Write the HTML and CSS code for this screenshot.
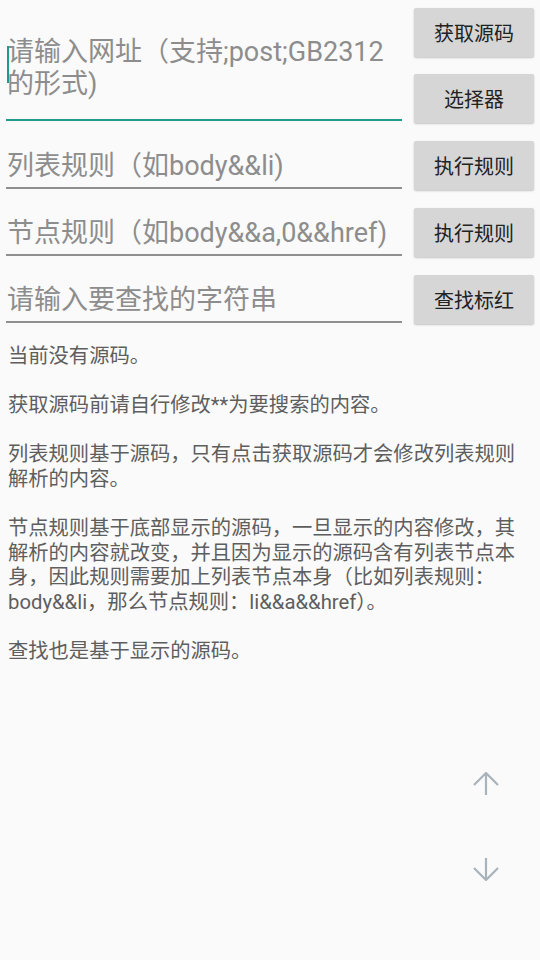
FILE: index.html
```html
<!DOCTYPE html>
<html lang="zh-CN">
<head>
<meta charset="utf-8">
<title>规则测试</title>
<link rel="stylesheet" href="styles.css">
</head>
<body>
<div class="form">
  <div class="row">
    <div class="field field--focus">
      <span class="cursor"></span>
      <span class="hint">请输入网址（支持;post;GB2312<br>的形式)</span>
    </div>
    <div class="btn-col">
      <div class="btn">获取源码</div>
      <div class="btn">选择器</div>
    </div>
  </div>
  <div class="row">
    <div class="field"><span class="hint">列表规则（如body&amp;&amp;li)</span></div>
    <div class="btn-col"><div class="btn">执行规则</div></div>
  </div>
  <div class="row">
    <div class="field"><span class="hint">节点规则（如body&amp;&amp;a,0&amp;&amp;href)</span></div>
    <div class="btn-col"><div class="btn">执行规则</div></div>
  </div>
  <div class="row">
    <div class="field"><span class="hint">请输入要查找的字符串</span></div>
    <div class="btn-col"><div class="btn">查找标红</div></div>
  </div>
</div>
<div class="info">
  <p>当前没有源码。</p>
  <p>获取源码前请自行修改**为要搜索的内容。</p>
  <p>列表规则基于源码，只有点击获取源码才会修改列表规则解析的内容。</p>
  <p>节点规则基于底部显示的源码，一旦显示的内容修改，其解析的内容就改变，并且因为显示的源码含有列表节点本身，因此规则需要加上列表节点本身（比如列表规则：body&amp;&amp;li，那么节点规则：li&amp;&amp;a&amp;&amp;href）。</p>
  <p>查找也是基于显示的源码。</p>
</div>
<div class="scroll-btns">
  <svg class="arrow" viewBox="0 0 26 24" width="26" height="24"><path d="M13 1V23M1 13L13 1L25 13"/></svg>
  <svg class="arrow" viewBox="0 0 26 24" width="26" height="24"><path d="M13 1V23M1 11L13 23L25 11"/></svg>
</div>
</body>
</html>
```
FILE: styles.css
```css
html, body {
  margin: 0;
  padding: 0;
  background: #fafafa;
}
body {
  width: 540px;
  height: 960px;
  position: relative;
  overflow: hidden;
  font-family: Roboto, "Noto Sans CJK SC", sans-serif;
}
.form {
  display: flex;
  flex-direction: column;
  gap: 2px;
  padding: 0 6px;
}
.row {
  display: flex;
  gap: 12px;
}
.field {
  flex: 1;
  position: relative;
  display: flex;
  flex-direction: column;
  justify-content: flex-end;
  padding: 0 0 5px 1px;
  margin-bottom: 9px;
  border-bottom: 2px solid #8f8f8f;
}
.field--focus {
  padding-bottom: 19px;
  margin-bottom: 10px;
  border-bottom-color: #1f9a8c;
}
.hint {
  font-size: 27px;
  line-height: 32px;
  color: #8d8d8d;
  white-space: nowrap;
}
.cursor {
  position: absolute;
  left: 1px;
  top: 46px;
  width: 2px;
  height: 37px;
  background: #1f9a8c;
}
.btn-col {
  display: flex;
  flex-direction: column;
  gap: 1px;
  width: 120px;
}
.btn {
  height: 49px;
  margin: 8px 0;
  display: flex;
  align-items: center;
  justify-content: center;
  background: #d6d6d6;
  border-radius: 2px;
  box-shadow: 0 1px 2px rgba(0, 0, 0, 0.22);
  color: #222;
  font-size: 20px;
}
.info {
  margin-top: 12px;
  padding: 0 17px 0 8px;
  font-size: 20.3px;
  line-height: 24.6px;
  color: #5e5e5e;
}
.info p {
  margin: 0 0 24.6px;
}
.scroll-btns {
  position: absolute;
  top: 772px;
  left: 473px;
  display: flex;
  flex-direction: column;
  gap: 61px;
}
.arrow {
  display: block;
  fill: none;
  stroke: #a9b3bb;
  stroke-width: 2.2;
}
```
